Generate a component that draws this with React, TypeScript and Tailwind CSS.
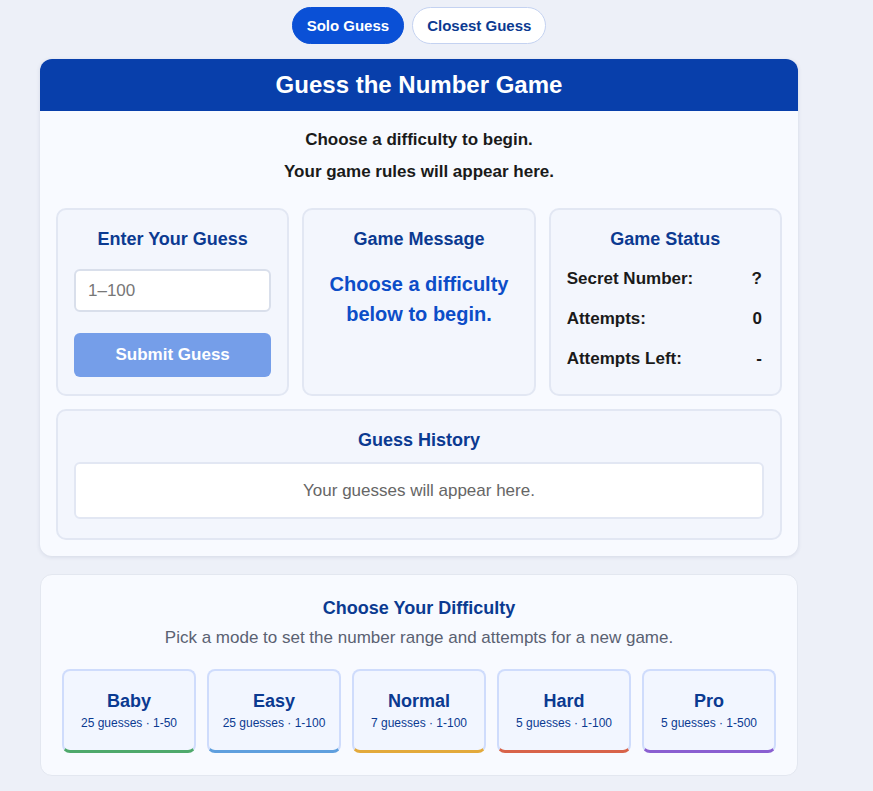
import React, { useState } from 'react';

const difficulties = [
  { name: 'Baby', info: '25 guesses · 1-50', bar: 'border-b-[#4fa96c]' },
  { name: 'Easy', info: '25 guesses · 1-100', bar: 'border-b-[#5f9fde]' },
  { name: 'Normal', info: '7 guesses · 1-100', bar: 'border-b-[#e3aa3c]' },
  { name: 'Hard', info: '5 guesses · 1-100', bar: 'border-b-[#d8634a]' },
  { name: 'Pro', info: '5 guesses · 1-500', bar: 'border-b-[#8a5fd1]' },
];

const App: React.FC = () => {
  const [mode, setMode] = useState<'solo' | 'closest'>('solo');
  const [guess, setGuess] = useState('');

  return (
    <div className="min-h-screen bg-[#edf0f8] font-['Liberation_Sans',Arial,sans-serif] text-[#1a1a1a]">
      <div className="w-[838px] flex flex-col items-center pt-[7px]">
        {/* mode tabs */}
        <div className="flex gap-2">
          <button
            onClick={() => setMode('solo')}
            className={`h-[37px] px-[14px] pt-[2px] rounded-full text-[15px] font-bold border ${
              mode === 'solo'
                ? 'bg-[#0a50d6] text-white border-[#0a50d6]'
                : 'bg-white text-[#0b3a91] border-[#c4d2f1]'
            }`}
          >
            Solo Guess
          </button>
          <button
            onClick={() => setMode('closest')}
            className={`h-[37px] px-[14px] pt-[2px] rounded-full text-[15px] font-bold border ${
              mode === 'closest'
                ? 'bg-[#0a50d6] text-white border-[#0a50d6]'
                : 'bg-white text-[#0b3a91] border-[#c4d2f1]'
            }`}
          >
            Closest Guess
          </button>
        </div>

        {/* game card */}
        <div className="mt-[15px] w-[758px] bg-[#f8faff] rounded-xl shadow-[0_1px_4px_rgba(30,50,100,0.12)] overflow-hidden">
          <div className="h-[52px] bg-[#083fab] flex items-center justify-center">
            <h1 className="text-white text-[24px] font-bold">Guess the Number Game</h1>
          </div>

          <div className="px-4 pt-[18px] pb-4">
            <p className="text-center text-[17px] font-bold leading-[22px]">Choose a difficulty to begin.</p>
            <p className="text-center text-[17px] font-bold leading-[22px] mt-[10px]">Your game rules will appear here.</p>

            <div className="grid grid-cols-3 gap-[13px] mt-[25px]">
              <div className="h-[188px] rounded-[10px] border-2 border-[#e2e7f3] bg-[#f3f6fd] px-4 pt-[18px] flex flex-col items-stretch">
                <h2 className="text-center text-[18px] font-bold text-[#0b3a91] leading-[22px]">Enter Your Guess</h2>
                <input
                  value={guess}
                  onChange={(e) => setGuess(e.target.value)}
                  placeholder="1–100"
                  className="mt-[19px] h-[43px] rounded-md border-2 border-[#d9dfeb] bg-white px-3 text-[17px] placeholder:text-[#777] outline-none"
                />
                <button
                  disabled
                  className="mt-[21px] h-[44px] rounded-md bg-[#759ee9] text-white text-[17px] font-bold"
                >
                  Submit Guess
                </button>
              </div>

              <div className="h-[188px] rounded-[10px] border-2 border-[#e2e7f3] bg-[#f3f6fd] px-4 pt-[18px]">
                <h2 className="text-center text-[18px] font-bold text-[#0b3a91] leading-[22px]">Game Message</h2>
                <p className="mt-[19px] text-center text-[20px] font-bold text-[#0c4dc8] leading-[30px]">
                  Choose a difficulty
                  <br />
                  below to begin.
                </p>
              </div>

              <div className="h-[188px] rounded-[10px] border-2 border-[#e2e7f3] bg-[#f3f6fd] px-4 pt-[18px]">
                <h2 className="text-center text-[18px] font-bold text-[#0b3a91] leading-[22px]">Game Status</h2>
                <div className="mt-[19px] flex flex-col gap-5 text-[17px] font-bold">
                  <div className="flex justify-between leading-[20px] pr-[2px]">
                    <span>Secret Number:</span>
                    <span>?</span>
                  </div>
                  <div className="flex justify-between leading-[20px] pr-[2px]">
                    <span>Attempts:</span>
                    <span>0</span>
                  </div>
                  <div className="flex justify-between leading-[20px] pr-[2px]">
                    <span>Attempts Left:</span>
                    <span>-</span>
                  </div>
                </div>
              </div>
            </div>

            <div className="mt-[13px] rounded-[10px] border-2 border-[#e2e7f3] bg-[#f3f6fd] px-4 pt-[18px] pb-[19px]">
              <h2 className="text-center text-[18px] font-bold text-[#0b3a91] leading-[22px]">Guess History</h2>
              <div className="mt-[11px] h-[57px] rounded-md border-2 border-[#e2e7f3] bg-white flex items-center justify-center text-[17px] text-[#666]">
                Your guesses will appear here.
              </div>
            </div>
          </div>
        </div>

        {/* difficulty card */}
        <div className="mt-[18px] w-[758px] bg-[#f8faff] rounded-xl border border-[#e3e7f0] px-[21px] pt-[22px] pb-[22px]">
          <h2 className="text-center text-[18px] font-bold text-[#0b3a91] leading-[22px]">Choose Your Difficulty</h2>
          <p className="mt-[9px] text-center text-[17px] text-[#5a6172] leading-[20px]">
            Pick a mode to set the number range and attempts for a new game.
          </p>
          <div className="mt-[21px] grid grid-cols-5 gap-[11px]">
            {difficulties.map((d) => (
              <button
                key={d.name}
                className={`h-[84px] rounded-lg border-2 border-[#cfdcfc] border-b-[3px] ${d.bar} bg-[#f2f6ff] flex flex-col items-center justify-center`}
              >
                <span className="text-[18px] font-bold text-[#0b3a91] leading-[22px]">{d.name}</span>
                <span className="mt-[3px] text-[12px] text-[#0b3a91] leading-[16px]">{d.info}</span>
              </button>
            ))}
          </div>
        </div>
      </div>
    </div>
  );
};

export default App;
